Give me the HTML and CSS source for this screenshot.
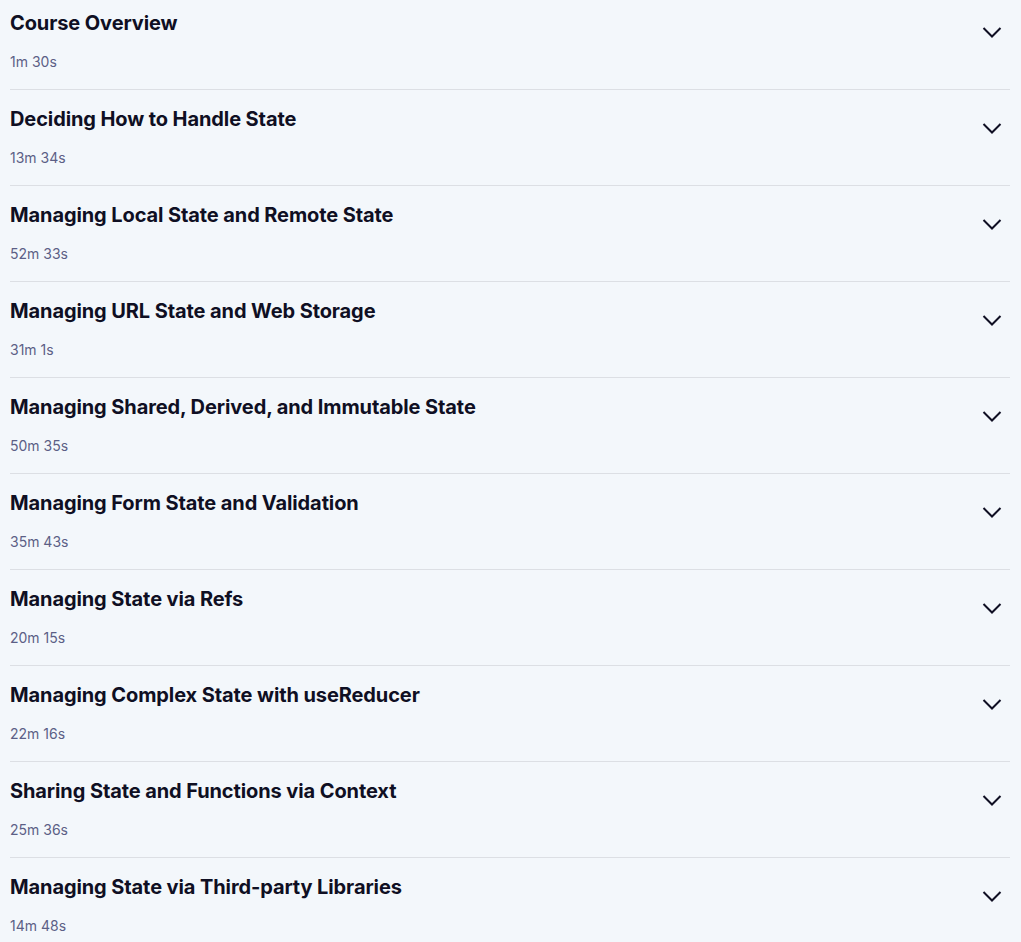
FILE: index.html
```html
<!DOCTYPE html>
<html lang="en">
<head>
    <meta charset="UTF-8">
    <meta name="viewport" content="width=device-width, initial-scale=1.0">
    <title>Course Contents</title>
    <link rel="stylesheet" href="styles.css">
</head>
<body>
    <div class="modulos">
        <div class="modulo">
            <div class="modulo-texto">
                <h3>Course Overview</h3>
                <span class="duracion">1m 30s</span>
            </div>
            <svg class="flecha" viewBox="0 0 24 24"><path d="M3.5 8l8.5 8.5 8.5-8.5"/></svg>
        </div>
        <div class="modulo">
            <div class="modulo-texto">
                <h3>Deciding How to Handle State</h3>
                <span class="duracion">13m 34s</span>
            </div>
            <svg class="flecha" viewBox="0 0 24 24"><path d="M3.5 8l8.5 8.5 8.5-8.5"/></svg>
        </div>
        <div class="modulo">
            <div class="modulo-texto">
                <h3>Managing Local State and Remote State</h3>
                <span class="duracion">52m 33s</span>
            </div>
            <svg class="flecha" viewBox="0 0 24 24"><path d="M3.5 8l8.5 8.5 8.5-8.5"/></svg>
        </div>
        <div class="modulo">
            <div class="modulo-texto">
                <h3>Managing URL State and Web Storage</h3>
                <span class="duracion">31m 1s</span>
            </div>
            <svg class="flecha" viewBox="0 0 24 24"><path d="M3.5 8l8.5 8.5 8.5-8.5"/></svg>
        </div>
        <div class="modulo">
            <div class="modulo-texto">
                <h3>Managing Shared, Derived, and Immutable State</h3>
                <span class="duracion">50m 35s</span>
            </div>
            <svg class="flecha" viewBox="0 0 24 24"><path d="M3.5 8l8.5 8.5 8.5-8.5"/></svg>
        </div>
        <div class="modulo">
            <div class="modulo-texto">
                <h3>Managing Form State and Validation</h3>
                <span class="duracion">35m 43s</span>
            </div>
            <svg class="flecha" viewBox="0 0 24 24"><path d="M3.5 8l8.5 8.5 8.5-8.5"/></svg>
        </div>
        <div class="modulo">
            <div class="modulo-texto">
                <h3>Managing State via Refs</h3>
                <span class="duracion">20m 15s</span>
            </div>
            <svg class="flecha" viewBox="0 0 24 24"><path d="M3.5 8l8.5 8.5 8.5-8.5"/></svg>
        </div>
        <div class="modulo">
            <div class="modulo-texto">
                <h3>Managing Complex State with useReducer</h3>
                <span class="duracion">22m 16s</span>
            </div>
            <svg class="flecha" viewBox="0 0 24 24"><path d="M3.5 8l8.5 8.5 8.5-8.5"/></svg>
        </div>
        <div class="modulo">
            <div class="modulo-texto">
                <h3>Sharing State and Functions via Context</h3>
                <span class="duracion">25m 36s</span>
            </div>
            <svg class="flecha" viewBox="0 0 24 24"><path d="M3.5 8l8.5 8.5 8.5-8.5"/></svg>
        </div>
        <div class="modulo">
            <div class="modulo-texto">
                <h3>Managing State via Third-party Libraries</h3>
                <span class="duracion">14m 48s</span>
            </div>
            <svg class="flecha" viewBox="0 0 24 24"><path d="M3.5 8l8.5 8.5 8.5-8.5"/></svg>
        </div>
    </div>
</body>
</html>
```

FILE: styles.css
```css
body {
    margin: 0;
    background-color: #f3f7fb;
    font-family: "Inter", "Noto Sans", sans-serif;
    overflow: hidden;
}

.modulos {
    margin-top: -6px; /* la lista ya viene desplazada */
    padding: 0 11px 0 10px;
}

.modulo {
    display: flex;
    justify-content: space-between;
    align-items: flex-start;
    padding: 15px 0 17px;
    border-bottom: 1px solid #dcdfe4;
}

.modulo-texto {
    display: flex;
    flex-direction: column;
    gap: 15px;
}

.modulo h3 {
    margin: 0;
    font-size: 20px;
    line-height: 28px;
    font-weight: 700;
    color: #0f0f23;
    letter-spacing: -0.1px;
}

.duracion {
    font-size: 14px;
    line-height: 20px;
    color: #5c5f86;
}

.flecha {
    width: 24px;
    height: 24px;
    margin-top: 11px;
    margin-right: 6px;
    fill: none;
    stroke: #0f0f23;
    stroke-width: 2;
}
```
